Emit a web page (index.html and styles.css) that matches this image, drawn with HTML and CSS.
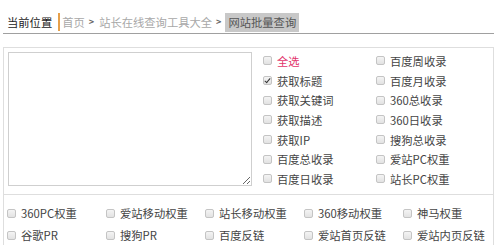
FILE: index.html
```html
<!DOCTYPE html>
<html lang="zh">
<head>
<meta charset="utf-8">
<link rel="stylesheet" href="styles.css">
</head>
<body>
<div class="crumbs">
  <span class="here">当前位置</span>
  <span class="bar"></span>
  <span class="link">首页</span>
  <span class="sep">&gt;</span>
  <span class="link">站长在线查询工具大全</span>
  <span class="sep">&gt;</span>
  <span class="current">网站批量查询</span>
</div>
<div class="box">
  <div class="top">
    <textarea class="urls"></textarea>
    <div class="opts">
      <label class="opt all"><i class="cb"></i>全选</label>
      <label class="opt"><i class="cb"></i>百度周收录</label>
      <label class="opt"><i class="cb on"></i>获取标题</label>
      <label class="opt"><i class="cb"></i>百度月收录</label>
      <label class="opt"><i class="cb"></i>获取关键词</label>
      <label class="opt"><i class="cb"></i>360总收录</label>
      <label class="opt"><i class="cb"></i>获取描述</label>
      <label class="opt"><i class="cb"></i>360日收录</label>
      <label class="opt"><i class="cb"></i>获取IP</label>
      <label class="opt"><i class="cb"></i>搜狗总收录</label>
      <label class="opt"><i class="cb"></i>百度总收录</label>
      <label class="opt"><i class="cb"></i>爱站PC权重</label>
      <label class="opt"><i class="cb"></i>百度日收录</label>
      <label class="opt"><i class="cb"></i>站长PC权重</label>
    </div>
  </div>
  <div class="bottom">
    <label class="opt"><i class="cb"></i>360PC权重</label>
    <label class="opt"><i class="cb"></i>爱站移动权重</label>
    <label class="opt"><i class="cb"></i>站长移动权重</label>
    <label class="opt"><i class="cb"></i>360移动权重</label>
    <label class="opt"><i class="cb"></i>神马权重</label>
    <label class="opt"><i class="cb"></i>谷歌PR</label>
    <label class="opt"><i class="cb"></i>搜狗PR</label>
    <label class="opt"><i class="cb"></i>百度反链</label>
    <label class="opt"><i class="cb"></i>爱站首页反链</label>
    <label class="opt"><i class="cb"></i>爱站内页反链</label>
  </div>
</div>
</body>
</html>
```
FILE: styles.css
```css
html, body {
  margin: 0;
  padding: 0;
  background: #fff;
  font-family: "Noto Sans CJK SC", "Noto Sans", sans-serif;
  font-size: 11.3px;
  color: #444;
  overflow: hidden;
}
.crumbs {
  display: flex;
  align-items: center;
  height: 18px;
  padding: 13px 0 2px 4px;
  margin: 0 6px 0 3px;
  border-bottom: 1px solid #a0a0a0;
  line-height: 18px;
}
.here {
  color: #222;
}
.bar {
  width: 2px;
  height: 18px;
  background: #e6a04a;
  margin: 0 2px 0 6px;
}
.link {
  color: #a8a8a8;
}
.sep {
  color: #666;
  font-size: 9px;
  margin: 0 5px 0 4px;
  font-weight: bold;
}
.current {
  background: #c8c8c8;
  color: #555;
  padding: 0 3px;
  margin-left: -1px;
  height: 19px;
  line-height: 19px;
}
.box {
  margin: 13px 6px 0 3px;
  border-left: 1px solid #dedede;
  border-right: 1px solid #dedede;
}
.top {
  display: flex;
  height: 142px;
  padding: 4px 0 0 4px;
  border-top: 1px solid #dedede;
  border-bottom: 1px solid #dedede;
}
.urls {
  display: block;
  box-sizing: border-box;
  width: 244px;
  height: 134px;
  margin: 0;
  border: 1px solid #cfcfcf;
  resize: both;
  outline: none;
}
.opts {
  display: grid;
  grid-template-columns: 113px 113px;
  grid-auto-rows: 19.7px;
  margin: -1px 0 0 11px;
}
.opt {
  display: flex;
  align-items: center;
  white-space: nowrap;
  color: #444;
}
.opt.all {
  color: #e2336b;
}
.cb {
  display: inline-block;
  box-sizing: border-box;
  width: 9px;
  height: 9px;
  margin-right: 5px;
  border: 1px solid #c4c4c4;
  border-radius: 2px;
  background: linear-gradient(#f4f4f4, #e2e2e2);
  position: relative;
  flex: none;
}
.cb.on::after {
  content: "";
  position: absolute;
  left: 2px;
  top: 0px;
  width: 2px;
  height: 5px;
  border: solid #333;
  border-width: 0 1.5px 1.5px 0;
  transform: rotate(40deg);
}
.bottom {
  display: grid;
  grid-template-columns: repeat(5, 99px);
  grid-auto-rows: 22px;
  padding: 7px 0 10px 3px;
}
```
